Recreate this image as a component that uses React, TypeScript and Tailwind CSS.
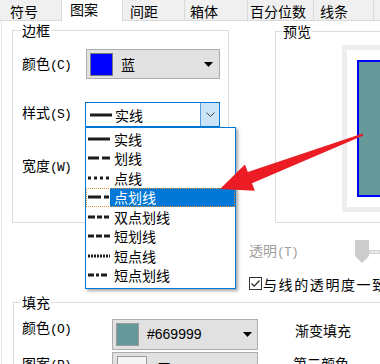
const cjk = "font-['Noto_Sans_CJK_SC','Noto_Sans',sans-serif]";

type TabProps = { label: string; className: string; active?: boolean };

function Tab({ label, className, active }: TabProps) {
    if (active) {
        return (
            <div className={`h-[21px] shrink-0 border-r border-[#d9d9d9] bg-white pt-px leading-[16px] ${className}`}>
                {label}
            </div>
        );
    }
    return (
        <div className={`h-[21px] shrink-0 border-r border-b border-[#d9d9d9] pt-[3px] leading-[17px] ${className}`}>{label}</div>
    );
}

function Key({ text, k }: { text: string; k: string }) {
    return (
        <span className="whitespace-nowrap">
            {text}
            <span className="font-['Liberation_Mono',monospace] text-[13px] tracking-[-0.8px]">({k})</span>
        </span>
    );
}

function Group({ title, className, titleClass, children }: { title: string; className: string; titleClass: string; children?: React.ReactNode }) {
    return (
        <div className={`relative shrink-0 border-[#dcdcdc] ${className}`}>
            <span className={`absolute -top-[9px] bg-white px-[1px] leading-[16px] ${titleClass}`}>{title}</span>
            {children}
        </div>
    );
}

function Caret() {
    return (
        <svg width="9" height="5" className="shrink-0">
            <polygon points="0,0 9,0 4.5,5" fill="#000" />
        </svg>
    );
}

function LineSample({ dash }: { dash: string }) {
    return (
        <svg width="22" height="4" className="shrink-0">
            <line x1="0" y1="2" x2="22" y2="2" stroke="#1c1c1c" strokeWidth="3" strokeDasharray={dash || undefined} />
        </svg>
    );
}

const lineStyles = [
    { name: "实线", dash: "" },
    { name: "划线", dash: "11 3" },
    { name: "点线", dash: "3 3" },
    { name: "点划线", dash: "13 3 5 30" },
    { name: "双点划线", dash: "7 2 5 2 5 30" },
    { name: "短划线", dash: "6 2" },
    { name: "短点线", dash: "2 1" },
    { name: "短点划线", dash: "6 2 3 2 6 30" },
];

export default function App() {
    return (
        <div className={`relative h-[364px] w-[380px] overflow-hidden bg-white text-[14px] text-black ${cjk}`}>
            {/* tabs */}
            <div className="flex h-[21px] items-start bg-[#f0f0f0]">
                <Tab label="符号" className="w-[62px] pl-[10px]" />
                <Tab label="图案" className="w-[61px] pl-[8px]" active />
                <Tab label="间距" className="w-[62px] pl-[7px]" />
                <Tab label="箱体" className="w-[63px] pl-[5px]" />
                <Tab label="百分位数" className="w-[66px] pl-[2px]" />
                <Tab label="线条" className="w-[60px] pl-[6px]" />
                <div className="h-[21px] flex-1 border-b border-[#d9d9d9]" />
            </div>

            <div className="ml-px h-[343px] border-l border-[#e3e3e3]">
                <div className="flex items-start">
                    <Group title="边框" className="ml-[10px] mt-[9px] h-[193px] w-[217px] border" titleClass="left-[8px]">
                        <div className="flex flex-col pl-[9px]">
                            <div className="mt-[18px] flex h-[30px] items-center">
                                <div className="w-[64px]"><Key text="颜色" k="C" /></div>
                                <div className="flex h-[30px] w-[134px] items-center border border-[#adadad] bg-[#e1e1e1] pl-[3px]">
                                    <div className="h-[23px] w-[23px] border border-[#7a7a7a] bg-[#0000ff]" />
                                    <span className="ml-[8px] leading-[16px]">蓝</span>
                                    <div className="ml-auto mr-[6px] flex"><Caret /></div>
                                </div>
                            </div>
                            <div className="mt-[23px] flex h-[25px] items-center">
                                <div className="mb-[3px] w-[63px]"><Key text="样式" k="S" /></div>
                                <div className="flex h-[25px] w-[135px] items-center border border-[#0078d7] bg-white pl-[4px]">
                                    <LineSample dash="" />
                                    <span className="ml-[3px] leading-[16px]">实线</span>
                                    <div className="ml-auto flex h-full w-[19px] items-center justify-center border-l border-[#569de5] bg-[#cce4f7]">
                                        <svg width="9" height="5">
                                            <polyline points="0.5,0.5 4.5,4.5 8.5,0.5" fill="none" stroke="#444" strokeWidth="1" />
                                        </svg>
                                    </div>
                                </div>
                            </div>
                            <div className="mt-[27px] flex h-[24px] items-center">
                                <Key text="宽度" k="W" />
                            </div>
                        </div>
                    </Group>

                    <Group title="预览" className="ml-[46px] mt-[10px] h-[192px] w-[200px] border" titleClass="left-[6px]">
                        <div className="ml-[66px] mt-[13px] h-[167px] w-[167px] border-[5px] border-[#eeeeee] p-[10px]">
                            <div className="h-[137px] w-[137px] border-2 border-[#0000ff] bg-[#669999]" />
                        </div>
                    </Group>
                </div>

                <div className="ml-[247px] flex flex-col">
                    <div className="mt-[17px] flex h-[23px] items-center">
                        <div className="w-[114px] text-[#a0a0a0]"><Key text="透明" k="T" /></div>
                        <svg width="14" height="23" className="shrink-0">
                            <polygon points="0,0 14,0 14,16 7,23 0,16" fill="#cccccc" />
                        </svg>
                        <div className="h-[4px] w-[12px] border border-[#d6d6d6] bg-[#e7e7e7]" />
                    </div>
                    <div className="mt-[14px] flex h-[13px] items-center">
                        <div className="flex h-[13px] w-[13px] shrink-0 items-center justify-center border border-[#333] bg-white">
                            <svg width="11" height="11">
                                <polyline points="1.5,5.5 4.2,8.2 9.5,2.5" fill="none" stroke="#222" strokeWidth="1.2" />
                            </svg>
                        </div>
                        <span className="ml-[1px] whitespace-nowrap leading-[16px] tracking-[1.6px]">与线的透明度一致</span>
                    </div>
                </div>

                <Group title="填充" className="ml-[11px] mt-[12px] h-[80px] w-[380px] border-l border-t" titleClass="left-[7px]">
                    <div className="flex flex-col pl-[8px]">
                        <div className="mt-[16px] flex items-start">
                            <div className="w-[90px] leading-[17px]"><Key text="颜色" k="O" /></div>
                            <div className="flex h-[31px] w-[146px] shrink-0 items-center border border-[#adadad] bg-[#e1e1e1] pl-[3px]">
                                <div className="h-[23px] w-[23px] border border-[#9a9a9a] bg-[#669999]" />
                                <span className="ml-[8px] font-['Liberation_Sans',sans-serif] text-[14px]">#669999</span>
                                <div className="ml-auto mr-[5px] flex"><Caret /></div>
                            </div>
                            <span className="ml-[37px] mt-[3px] whitespace-nowrap leading-[17px]">渐变填充</span>
                        </div>
                        <div className="mt-[2px] flex items-start">
                            <div className="mt-[3px] w-[90px] leading-[17px]"><Key text="图案" k="P" /></div>
                            <div className="flex h-[31px] w-[146px] shrink-0 items-center border border-[#adadad] bg-[#e1e1e1] pl-[4px]">
                                <div className="h-[23px] w-[30px] border border-[#9a9a9a] bg-[#f4f4f4]" />
                                <span className="ml-[10px] leading-[16px]">无</span>
                                <div className="ml-auto mr-[5px] flex"><Caret /></div>
                            </div>
                            <span className="ml-[35px] mt-[3px] whitespace-nowrap leading-[17px]">第二颜色</span>
                        </div>
                    </div>
                </Group>
            </div>

            {/* open dropdown list */}
            <div className="absolute left-[85px] top-[127px] h-[162px] w-[151px] border border-[#0078d7] bg-white pt-px shadow-[2px_2px_3px_rgba(0,0,0,0.35)]">
                {lineStyles.map((s, i) =>
                    i === 3 ? (
                        <div key={s.name} className="flex h-[19.5px] items-center pl-[2px] outline-1 -outline-offset-1 outline-dotted outline-[#e0913a]">
                            <LineSample dash={s.dash} />
                            <div className="flex h-full flex-1 items-center bg-[#0078d7] pl-[4px] text-white">
                                <span className="leading-[16px]">{s.name}</span>
                            </div>
                        </div>
                    ) : (
                        <div key={s.name} className="flex h-[19.5px] items-center pl-[2px]">
                            <LineSample dash={s.dash} />
                            <span className="ml-[4px] leading-[16px]">{s.name}</span>
                        </div>
                    )
                )}
            </div>

            {/* red annotation arrow */}
            <svg className="pointer-events-none absolute left-0 top-0" width="380" height="364">
                <polygon
                    points="220,189 244.9,164.5 247.8,172 362.6,133.6 363.4,135.4 252,183.2 254.9,190.7"
                    fill="#ec1c24"
                />
            </svg>
        </div>
    );
}
